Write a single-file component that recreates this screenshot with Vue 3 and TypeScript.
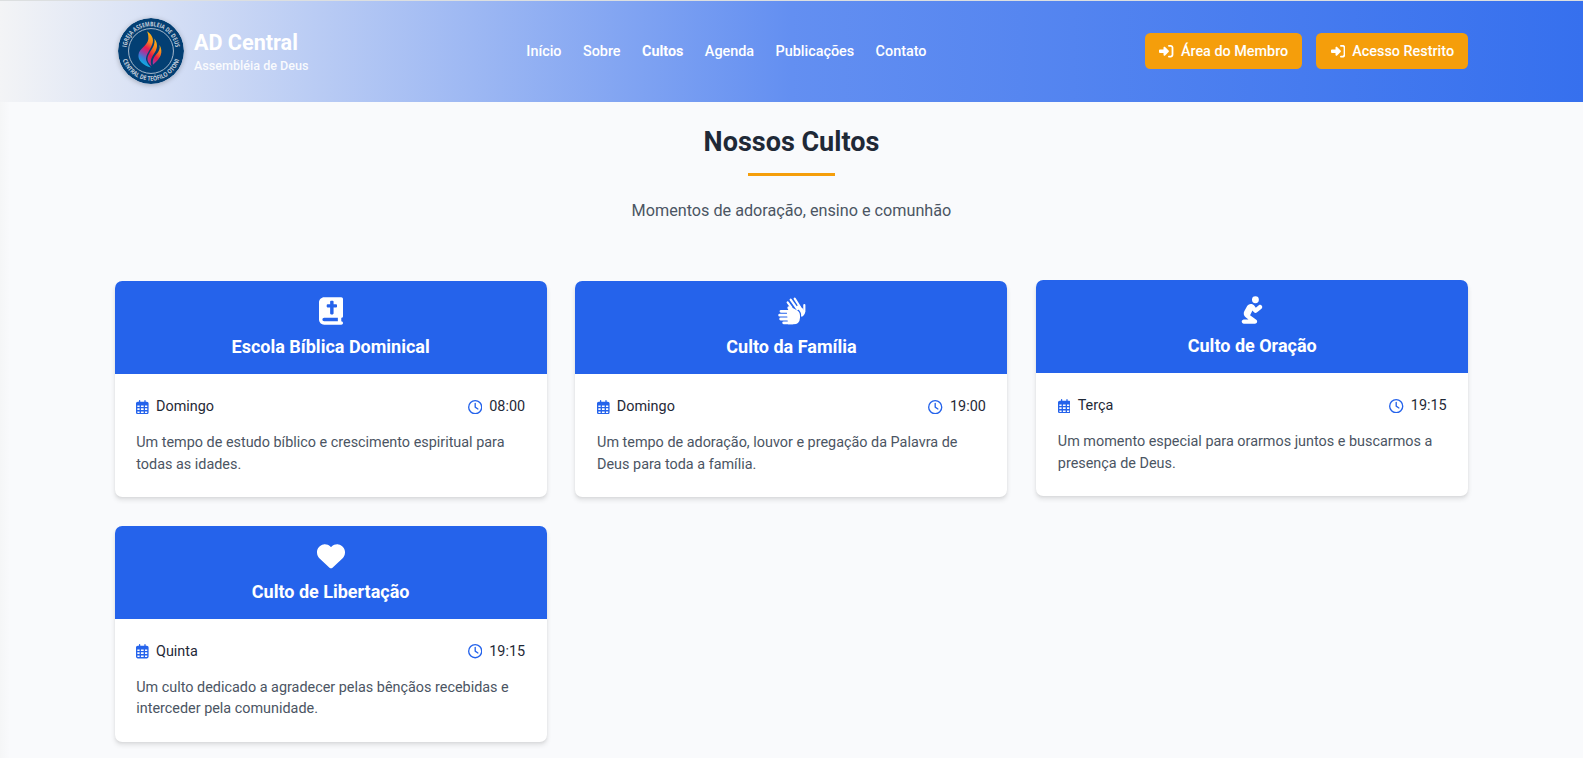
<script setup lang="ts">
interface Service {
  title: string
  icon: 'bible' | 'hands' | 'pray' | 'heart'
  day: string
  time: string
  text: string
  raised?: boolean
}

const links: string[] = ['Início', 'Sobre', 'Cultos', 'Agenda', 'Publicações', 'Contato']
const activeLink = 'Cultos'
const actions: string[] = ['Área do Membro', 'Acesso Restrito']

const services: Service[] = [
  { title: 'Escola Bíblica Dominical', icon: 'bible', day: 'Domingo', time: '08:00', text: 'Um tempo de estudo bíblico e crescimento espiritual para todas as idades.' },
  { title: 'Culto da Família', icon: 'hands', day: 'Domingo', time: '19:00', text: 'Um tempo de adoração, louvor e pregação da Palavra de Deus para toda a família.' },
  { title: 'Culto de Oração', icon: 'pray', day: 'Terça', time: '19:15', text: 'Um momento especial para orarmos juntos e buscarmos a presença de Deus.', raised: true },
  { title: 'Culto de Libertação', icon: 'heart', day: 'Quinta', time: '19:15', text: 'Um culto dedicado a agradecer pelas bênçãos recebidas e interceder pela comunidade.' },
]
</script>

<template>
  <div class="page">
    <header class="header">
      <div class="container bar">
        <div class="brand">
          <svg class="logo" viewBox="0 0 100 100">
            <defs>
              <linearGradient id="flame" x1="0.65" y1="0" x2="0.4" y2="1">
                <stop offset="0" stop-color="#fdb913" />
                <stop offset="0.25" stop-color="#f7861f" />
                <stop offset="0.45" stop-color="#ea1d4f" />
                <stop offset="0.6" stop-color="#a8369c" />
                <stop offset="0.76" stop-color="#3f78d8" />
                <stop offset="0.9" stop-color="#12a5e0" />
                <stop offset="1" stop-color="#20d0e8" />
              </linearGradient>
              <linearGradient id="flame2" x1="0.7" y1="0" x2="0.3" y2="1">
                <stop offset="0" stop-color="#fdb913" />
                <stop offset="0.35" stop-color="#f6701f" />
                <stop offset="0.65" stop-color="#e5184a" />
                <stop offset="1" stop-color="#a8369c" />
              </linearGradient>
              <path id="arcTop" d="M12.5 50A37.5 37.5 0 0 1 87.5 50" />
              <path id="arcBottom" d="M5 50A45 45 0 0 0 95 50" />
            </defs>
            <circle cx="50" cy="50" r="50" fill="#033f73" />
            <circle cx="50" cy="50" r="34" fill="none" stroke="#c3cedb" stroke-width="1.3" />
            <text class="seal"><textPath href="#arcTop" startOffset="50%" text-anchor="middle" textLength="107" lengthAdjust="spacingAndGlyphs">IGREJA ASSEMBLEIA DE DEUS</textPath></text>
            <text class="seal"><textPath href="#arcBottom" startOffset="50%" text-anchor="middle" textLength="114" lengthAdjust="spacingAndGlyphs">CENTRAL DE TEÓFILO OTONI</textPath></text>
            <path d="M44 20C54 27 55 35 50.500 43C46 52 40 59 43.500 66C45 70 47 72 50 75C38 72 30 64 31 56C32 46 45 42 46 32C46 27 46 24 44 20Z" fill="url(#flame)" />
            <path d="M55 31C62 40 59 48 54 55C50 61 48.500 66 51 73C44 67 43 61 47 54C51 47 57 41 55 31Z" fill="url(#flame2)" />
            <path d="M63 41C69 52 65 61 53 71C52 63 54 60 58 55C62 51 64 47 63 41Z" fill="url(#flame2)" />
          </svg>
          <div class="brand-text">
            <span class="brand-name">AD Central</span>
            <span class="brand-sub">Assembléia de Deus</span>
          </div>
        </div>
        <nav class="nav">
          <a v-for="link in links" :key="link" class="link" :class="{ active: link === activeLink }">{{ link }}</a>
        </nav>
        <div class="actions">
          <button v-for="action in actions" :key="action" class="action">
            <svg class="action-icon" viewBox="0 0 512 512" fill="currentColor">
              <path d="M217.9 105.9L340.7 228.7c7.2 7.2 11.3 17.1 11.3 27.3s-4.1 20.1-11.3 27.3L217.9 406.1c-6.4 6.4-15 9.9-24 9.9c-18.7 0-33.9-15.2-33.9-33.9l0-62.1L32 320c-17.7 0-32-14.3-32-32l0-64c0-17.7 14.3-32 32-32l128 0 0-62.1c0-18.7 15.2-33.9 33.9-33.9c9 0 17.6 3.6 24 9.9zM352 416l64 0c17.7 0 32-14.3 32-32l0-256c0-17.7-14.3-32-32-32l-64 0c-17.7 0-32-14.3-32-32s14.3-32 32-32l64 0c53 0 96 43 96 96l0 256c0 53-43 96-96 96l-64 0c-17.7 0-32-14.3-32-32s14.3-32 32-32z" />
            </svg>
            <span>{{ action }}</span>
          </button>
        </div>
      </div>
    </header>

    <main class="container">
      <div class="intro">
        <h1 class="title">Nossos Cultos</h1>
        <div class="rule"></div>
        <p class="lead">Momentos de adoração, ensino e comunhão</p>
      </div>

      <div class="grid">
        <article v-for="service in services" :key="service.title" class="card" :class="{ raised: service.raised }">
          <div class="card-head">
            <svg v-if="service.icon === 'bible'" class="icon narrow" viewBox="0 0 448 512" fill="currentColor">
              <path d="M96 0C43 0 0 43 0 96V416c0 53 43 96 96 96H384h32c17.7 0 32-14.3 32-32s-14.3-32-32-32V384c17.7 0 32-14.3 32-32V32c0-17.7-14.3-32-32-32H384 96zm0 384H352v64H96c-17.7 0-32-14.3-32-32s14.3-32 32-32zM208 80c0-8.8 7.2-16 16-16h32c8.8 0 16 7.2 16 16v48h48c8.8 0 16 7.2 16 16v32c0 8.8-7.2 16-16 16H272V304c0 8.8-7.2 16-16 16H224c-8.8 0-16-7.2-16-16V192H160c-8.8 0-16-7.2-16-16V144c0-8.8 7.2-16 16-16h48V80z" />
            </svg>
            <svg v-else-if="service.icon === 'hands'" class="icon wide" viewBox="0 0 84 84" fill="none" stroke="currentColor" stroke-linecap="round" stroke-linejoin="round">
              <g stroke-width="6.5">
                <path d="M29 16L40 31M38 8L58 36M50 5L66 30" />
                <path d="M79 24V44Q78 50 73 55" />
              </g>
              <path d="M54 31L60 24L68 29L75 35L80 44L76 54L70 60Q71 43 58 36Z" fill="currentColor" stroke="none" />
              <g stroke-width="8.5">
                <path d="M9 43H40M5 54.500H40M8 66H40M17 77.500H44" />
              </g>
              <path d="M14 39L31 39L28 33Q28 26 35 28L54 38Q66 43 66 56V62Q65 82 46 82H30L26 39Z" fill="currentColor" stroke="none" />
            </svg>
            <svg v-else-if="service.icon === 'pray'" class="icon narrow" viewBox="0 0 448 512" fill="currentColor">
              <path d="M352 64A64 64 0 1 0 224 64a64 64 0 1 0 128 0zM232.7 264l22.9 31.5c6.5 8.9 16.3 14.7 27.2 16.1s21.9-1.7 30.4-8.7l88-72c17.1-14 19.6-39.2 5.6-56.3s-39.2-19.6-56.3-5.6l-55.2 45.2-26.2-36C253.6 156.7 228.6 144 202 144c-30.9 0-59.2 17.1-73.6 44.4L79.8 280.9c-20.2 38.5-9.4 85.9 25.6 111.8L158.6 432H72c-22.1 0-40 17.9-40 40s17.9 40 40 40H280c17.3 0 32.6-11.1 38-27.5s-.3-34.4-14.2-44.7L187.7 354l45-90z" />
            </svg>
            <svg v-else class="icon" viewBox="0 0 512 512" fill="currentColor">
              <path d="M47.6 300.4L228.3 469.1c7.5 7 17.4 10.9 27.7 10.9s20.2-3.9 27.7-10.9L464.4 300.4c30.4-28.3 47.6-68 47.6-109.5v-5.8c0-69.9-50.5-129.5-119.4-141C347 36.5 300.6 51.4 268 84L256 96 244 84c-32.6-32.6-79-47.5-124.6-39.9C50.5 55.6 0 115.2 0 185.1v5.8c0 41.5 17.2 81.2 47.6 109.5z" />
            </svg>
            <h2 class="card-title">{{ service.title }}</h2>
          </div>
          <div class="card-body">
            <div class="meta">
              <span class="meta-item">
                <svg class="calendar" viewBox="0 0 448 512" fill="currentColor">
                  <path d="M152 24c0-13.3-10.7-24-24-24s-24 10.7-24 24V64H64C28.7 64 0 92.7 0 128v16 48V448c0 35.3 28.7 64 64 64H384c35.3 0 64-28.7 64-64V192 144 128c0-35.3-28.7-64-64-64H344V24c0-13.3-10.7-24-24-24s-24 10.7-24 24V64H152V24zM48 192h80v56H48V192zm0 104h80v64H48V296zm128 0h96v64H176V296zm144 0h80v64H320V296zm80-48H320V192h80v56zm0 160v40c0 8.8-7.2 16-16 16H320V408h80zm-128 0v56H176V408h96zm-144 0v56H64c-8.8 0-16-7.2-16-16V408h80zM272 248H176V192h96v56z" />
                </svg>
                {{ service.day }}
              </span>
              <span class="meta-item">
                <svg class="clock" viewBox="0 0 512 512" fill="currentColor">
                  <path d="M464 256A208 208 0 1 1 48 256a208 208 0 1 1 416 0zM0 256a256 256 0 1 0 512 0A256 256 0 1 0 0 256zM232 120V256c0 8 4 15.5 10.7 20l96 64c11 7.4 25.9 4.4 33.3-6.7s4.4-25.9-6.7-33.3L280 243.2V120c0-13.3-10.7-24-24-24s-24 10.7-24 24z" />
                </svg>
                {{ service.time }}
              </span>
            </div>
            <p class="text">{{ service.text }}</p>
          </div>
        </article>
      </div>
    </main>
  </div>
</template>

<style>
html,
body {
  margin: 0;
  background: #f9fafb;
}
</style>

<style scoped>
.page {
  height: 758px;
  overflow: hidden;
  box-sizing: border-box;
  background: linear-gradient(90deg, #f5f6f7 0, #f9fafc 10px);
  font-family: Roboto, 'Liberation Sans', sans-serif;
  font-size: 14.4px;
  line-height: 21.6px;
  color: #1f2937;
}
.container {
  width: 1353.6px;
  margin: 0 auto 0 114.67px;
}
.header {
  height: 102px;
  box-sizing: border-box;
  border-top: 1px solid #dcdfe0;
  background: linear-gradient(90deg, #f3f4f6 0%, #638ff1 50%, #3670ee 100%);
  color: #fff;
}
.bar {
  height: 100px;
  display: grid;
  grid-template-columns: 411.7px 1fr auto;
  align-items: center;
}
.brand {
  display: flex;
  align-items: center;
  gap: 10px;
  padding-left: 3.3px;
}
.logo {
  width: 66px;
  height: 66px;
  border-radius: 50%;
  box-shadow: 0 1px 5px rgba(0, 0, 0, 0.25);
}
.seal {
  font-family: 'Open Sans', sans-serif;
  font-size: 9.6px;
  font-weight: 700;
  fill: #c3cedb;
}
.brand-text {
  display: flex;
  flex-direction: column;
  padding-top: 1px;
}
.brand-name {
  font-size: 21.6px;
  line-height: 27px;
  font-weight: 700;
}
.brand-sub {
  font-size: 12.6px;
  line-height: 19px;
  font-weight: 500;
  opacity: 0.9;
}
.nav {
  display: flex;
  gap: 21.4px;
  padding-top: 1px;
}
.link {
  font-weight: 500;
}
.link.active {
  font-weight: 700;
}
.actions {
  display: flex;
  gap: 14px;
}
.action {
  display: flex;
  align-items: center;
  gap: 7.2px;
  height: 36px;
  padding: 0 14.2px;
  border: 0;
  border-radius: 5.4px;
  background: #f59e0b;
  color: #fff;
  font: 500 14.4px Roboto, 'Liberation Sans', sans-serif;
}
.action-icon {
  width: 14.4px;
  height: 14.4px;
}
.intro {
  display: flex;
  flex-direction: column;
  align-items: center;
  padding-top: 23px;
}
.title {
  margin: 0;
  font-size: 27px;
  line-height: 34px;
  font-weight: 700;
}
.rule {
  width: 87px;
  height: 3px;
  margin-top: 14px;
  background: #f59e0b;
}
.lead {
  margin: 21px 0 0;
  font-size: 16.2px;
  line-height: 27px;
  color: #4b5563;
}
.grid {
  display: grid;
  grid-template-columns: repeat(3, 1fr);
  gap: 28.8px;
  margin-top: 57px;
}
.card {
  height: 216px;
  overflow: hidden;
  border-radius: 7.2px;
  background: #fff;
  box-shadow: 0 3.6px 5.4px -0.9px rgba(0, 0, 0, 0.1), 0 1.8px 3.6px -1.8px rgba(0, 0, 0, 0.1);
}
.card.raised {
  transform: translateY(-1px);
}
.card-head {
  display: flex;
  flex-direction: column;
  align-items: center;
  height: 93px;
  box-sizing: border-box;
  padding-top: 16px;
  background: #2563eb;
  color: #fff;
}
.icon {
  width: 28px;
  height: 28px;
}
.icon.narrow {
  width: 24px;
}
.icon.wide {
  margin-left: 1px;
}
.card-title {
  margin: 9px 0 0;
  font-size: 18px;
  line-height: 25px;
  font-weight: 700;
}
.card-body {
  padding: 21.95px 21.6px 0;
}
.meta {
  display: flex;
  justify-content: space-between;
}
.meta-item {
  display: flex;
  align-items: center;
  gap: 7.2px;
}
.calendar {
  width: 12.6px;
  height: 14.4px;
  color: #2563eb;
}
.clock {
  width: 14.4px;
  height: 14.4px;
  color: #2563eb;
}
.text {
  margin: 14.4px 0 0;
  color: #4b5563;
}
</style>
